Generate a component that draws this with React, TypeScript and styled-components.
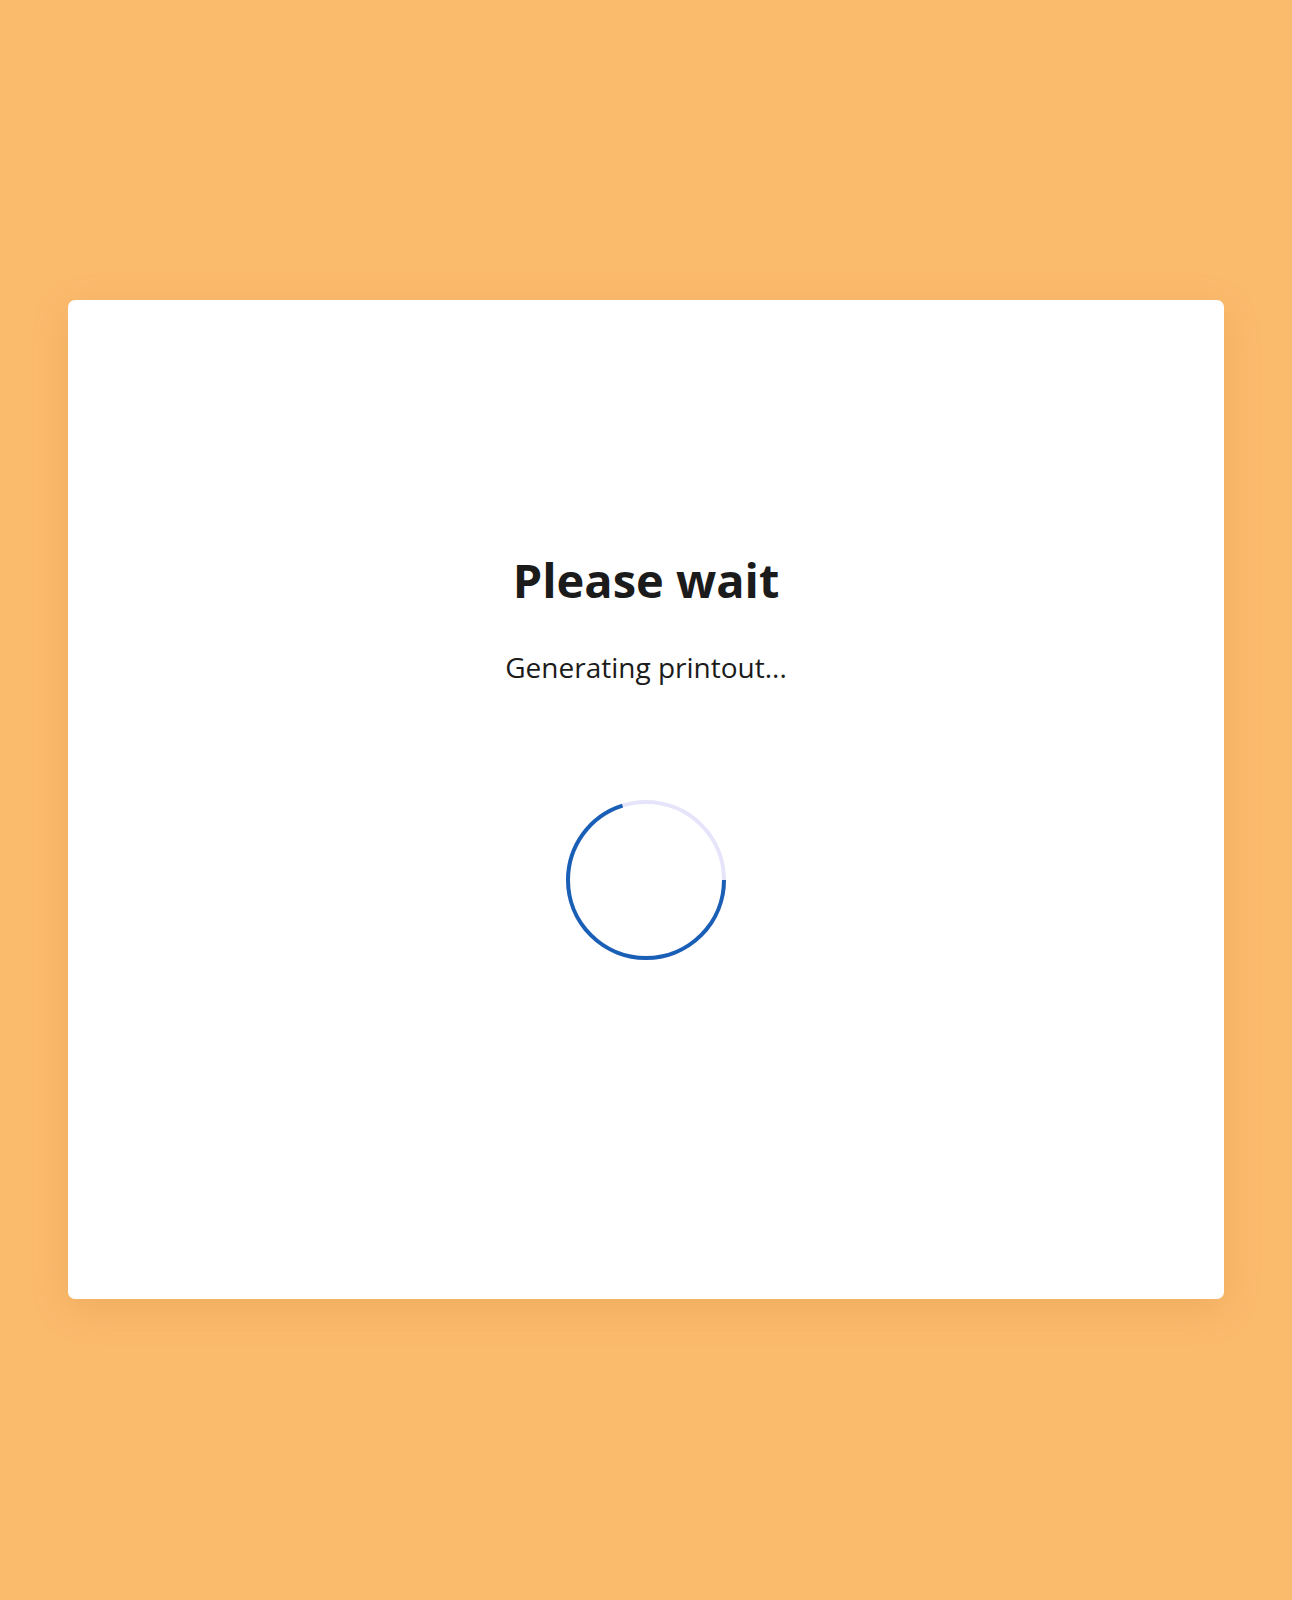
import React from "react";
import styled, { createGlobalStyle } from "styled-components";

const GlobalStyle = createGlobalStyle`
  html, body {
    margin: 0;
    padding: 0;
    background: #fbbb6d;
  }
  body {
    font-family: "Open Sans", "Noto Sans", Arial, sans-serif;
    color: #1b1b1b;
  }
`;

const Page = styled.main`
  min-height: 1600px;
  display: flex;
  align-items: flex-start;
  justify-content: center;
  padding: 300px 68px 0;
  box-sizing: border-box;
`;

const Card = styled.section`
  width: 100%;
  height: 999px;
  box-sizing: border-box;
  background: #ffffff;
  border-radius: 7px;
  box-shadow: 0 10px 40px rgba(150, 80, 0, 0.14);
  display: flex;
  flex-direction: column;
  align-items: center;
  padding-top: 252px;
`;

const Title = styled.h1`
  margin: 0;
  font-size: 47px;
  line-height: 56px;
  font-weight: 700;
  color: #1b1b1b;
`;

const Message = styled.p`
  margin: 41px 0 0;
  font-size: 28px;
  line-height: 36px;
  font-weight: 400;
  color: #1b1b1b;
`;

const SpinnerWrap = styled.div`
  margin-top: 115px;
  width: 160px;
  height: 160px;
`;

const Spinner: React.FC<{ progress: number }> = ({ progress }) => {
  const r = 78;
  const c = 2 * Math.PI * r;
  return (
    <SpinnerWrap role="progressbar" aria-label="Loading">
      <svg width="160" height="160" viewBox="0 0 160 160">
        <circle cx="80" cy="80" r={r} fill="none" stroke="#e6e4fb" strokeWidth="4" />
        <circle
          cx="80"
          cy="80"
          r={r}
          fill="none"
          stroke="#1a5fb6"
          strokeWidth="4"
          strokeDasharray={`${c * progress} ${c}`}
        />
      </svg>
    </SpinnerWrap>
  );
};

export default function App() {
  return (
    <>
      <GlobalStyle />
      <Page>
        <Card>
          <Title>Please wait</Title>
          <Message>Generating printout...</Message>
          <Spinner progress={0.7} />
        </Card>
      </Page>
    </>
  );
}
